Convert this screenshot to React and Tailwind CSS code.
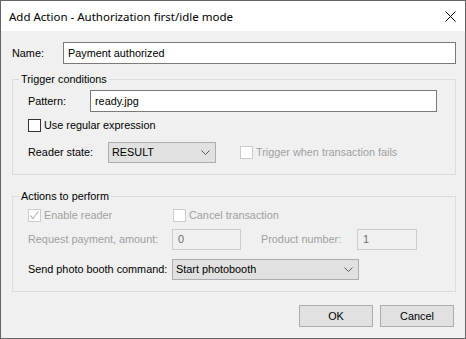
const BODY_FONT = "font-['Liberation_Sans',Arial,sans-serif] text-[10.85px] leading-[13px]";

function Chevron() {
  return (
    <svg width="9" height="5" viewBox="0 0 9 5" className="shrink-0">
      <polyline points="0.5,0.5 4.5,4.5 8.5,0.5" fill="none" stroke="#5a5a5a" strokeWidth="1" />
    </svg>
  );
}

function Checkbox({ checked = false, disabled = false, label, className = '' }) {
  return (
    <div className={`flex h-[13px] items-center ${className}`}>
      <span
        className={`flex h-[13px] w-[13px] shrink-0 items-center justify-center border bg-white ${
          disabled ? 'border-[#cccccc]' : 'border-[#333333]'
        }`}
      >
        {checked && (
          <svg width="11" height="11" viewBox="0 0 11 11">
            <polyline points="1.5,5.5 4,8.5 9.5,1.5" fill="none" stroke="#b8b8b8" strokeWidth="1.2" />
          </svg>
        )}
      </span>
      <span className={`ml-[3px] whitespace-nowrap ${disabled ? 'text-[#a0a0a0]' : 'text-black'}`}>{label}</span>
    </div>
  );
}

function TextBox({ value, className = '', disabled = false }) {
  return (
    <div
      className={`flex h-[22px] items-center border pl-[4px] ${
        disabled ? 'border-[#cccccc] bg-[#f0f0f0] text-[#6d6d6d]' : 'border-[#7a7a7a] bg-white text-black'
      } ${className}`}
    >
      {value}
    </div>
  );
}

function Select({ value, className = '' }) {
  return (
    <div
      className={`flex h-[21px] items-center justify-between border border-[#adadad] bg-[#e1e1e1] pl-[3px] pr-[5px] text-black ${className}`}
    >
      <span>{value}</span>
      <Chevron />
    </div>
  );
}

function Group({ title, children, className = '' }) {
  return (
    <fieldset className={`ml-[1px] border border-[#dcdcdc] pl-[15px] pb-[11px] ${className}`}>
      <legend className="-ml-[9px] px-[2px] leading-[15px] text-black">{title}</legend>
      {children}
    </fieldset>
  );
}

export default function App() {
  return (
    <div className={`flex h-[339px] w-[466px] flex-col border border-[#646464] bg-[#f0f0f0] ${BODY_FONT}`}>
      {/* Title bar */}
      <div className="flex h-[30px] shrink-0 items-center justify-between bg-white pl-[8px] pr-[9px]">
        <span className="font-['Noto_Sans',sans-serif] text-[11.5px] text-black">
          Add Action - Authorization first/idle mode
        </span>
        <svg width="11" height="11" viewBox="0 0 11 11">
          <path d="M0.5 0.5 L10.5 10.5 M10.5 0.5 L0.5 10.5" stroke="#000" strokeWidth="1" />
        </svg>
      </div>

      <div className="flex flex-1 flex-col pl-[10px] pr-[9px]">
        {/* Name */}
        <div className="mt-[11px] flex items-center">
          <span className="w-[52px] pl-[1px] text-black">Name:</span>
          <TextBox value="Payment authorized" className="flex-1" />
        </div>

        <Group title="Trigger conditions" className="mt-[8px]">
          <div className="mt-[3px] flex items-center">
            <span className="w-[62px] text-black">Pattern:</span>
            <TextBox value="ready.jpg" className="w-[347px]" />
          </div>
          <Checkbox label="Use regular expression" className="mt-[7px]" />
          <div className="mt-[10px] flex items-center">
            <span className="w-[80px] text-black">Reader state:</span>
            <Select value="RESULT" className="w-[108px]" />
            <Checkbox disabled label="Trigger when transaction fails" className="ml-[24px]" />
          </div>
        </Group>

        <Group title="Actions to perform" className="mt-[14px]">
          <div className="mt-[5px] flex items-center">
            <Checkbox checked disabled label="Enable reader" className="w-[145px]" />
            <Checkbox disabled label="Cancel transaction" />
          </div>
          <div className="mt-[7px] flex items-center">
            <span className="w-[144px] text-[#a0a0a0]">Request payment, amount:</span>
            <TextBox disabled value="0" className="!h-[21px] w-[69px] !pl-[5px]" />
            <span className="ml-[20px] w-[96px] text-[#a0a0a0]">Product number:</span>
            <TextBox disabled value="1" className="!h-[21px] w-[60px] !pl-[5px]" />
          </div>
          <div className="mt-[9px] flex items-center">
            <span className="w-[144px] text-black">Send photo booth command:</span>
            <Select value="Start photobooth" className="w-[187px]" />
          </div>
        </Group>

        {/* Buttons */}
        <div className="mt-[13px] flex justify-end gap-[7px] pr-[2px]">
          <button className="h-[22px] w-[74px] border border-[#adadad] bg-[#e1e1e1] text-black">OK</button>
          <button className="h-[22px] w-[74px] border border-[#adadad] bg-[#e1e1e1] text-black">Cancel</button>
        </div>
      </div>
    </div>
  );
}
